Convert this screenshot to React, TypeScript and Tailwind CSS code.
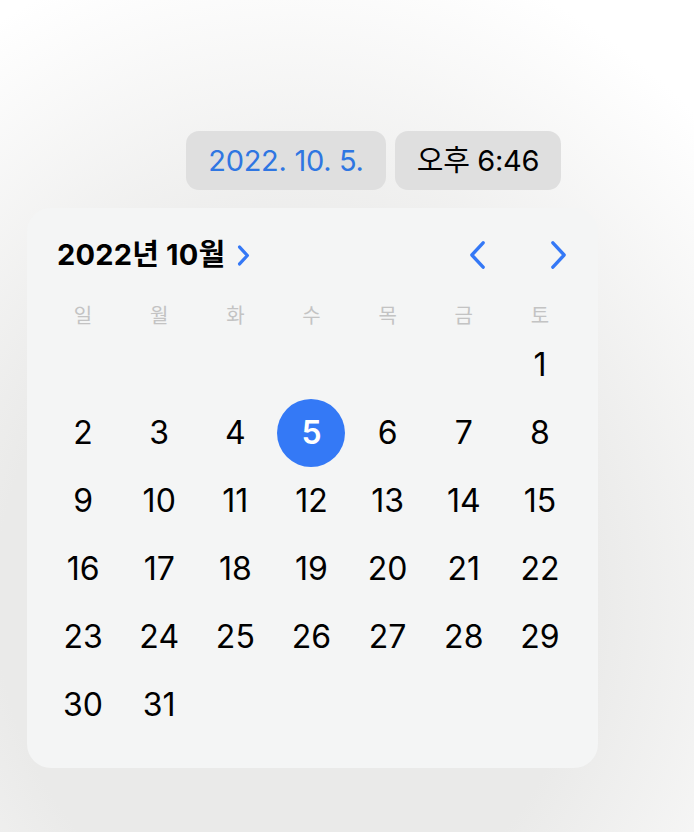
const days: (number | null)[] = [
  null, null, null, null, null, null, 1,
  ...Array.from({ length: 30 }, (_, i) => i + 2),
];

const weekdays = ['일', '월', '화', '수', '목', '금', '토'];

function Chevron({ dir, className, weight = 3.6 }: { dir: 'left' | 'right'; className?: string; weight?: number }) {
  return (
    <svg viewBox="0 0 20 32" className={className} fill="none" stroke="#3478f6" strokeWidth={weight} strokeLinecap="round" strokeLinejoin="round">
      {dir === 'left' ? <path d="M16 3 L4 16 L16 29" /> : <path d="M4 3 L16 16 L4 29" />}
    </svg>
  );
}

export default function App() {
  return (
    <div
      className="h-[832px] w-full overflow-hidden bg-[radial-gradient(ellipse_85%_80%_at_42%_72%,#eaeae9_50%,#ffffff_100%)] pt-[131px]"
      style={{ fontFamily: 'Inter, "Noto Sans CJK KR", sans-serif' }}
    >
      {/* date / time pills */}
      <div className="flex gap-[9px] pl-[186px]">
        <div className="flex h-[59px] w-[200px] items-center justify-center rounded-[13px] bg-[#dfdfdf] text-[29px] tracking-[-0.3px] text-[#2f76e2]">
          2022. 10. 5.
        </div>
        <div className="flex h-[59px] w-[166px] items-center justify-center rounded-[13px] bg-[#dfdfdf] text-[29px] tracking-[-0.3px] text-black">
          오후 6:46
        </div>
      </div>

      {/* calendar card */}
      <div className="ml-[27px] mt-[18px] h-[560px] w-[571px] rounded-[24px] bg-[#f4f5f5] pt-[27px]">
        <div className="flex h-[40px] items-center pl-[30px] pr-[30px]">
          <div className="text-[29px] font-bold tracking-[0.2px] text-black">2022년 10월</div>
          <Chevron dir="right" weight={5} className="ml-[12px] h-[21px] w-[13px]" />
          <div className="ml-auto flex items-center gap-[62px]">
            <Chevron dir="left" className="h-[30px] w-[19px]" />
            <Chevron dir="right" className="h-[30px] w-[19px]" />
          </div>
        </div>

        <div className="ml-[18px] mt-[25px] grid w-[533px] grid-cols-7">
          {weekdays.map((w) => (
            <div key={w} className="flex h-[31px] items-center justify-center text-[20px] text-[#c3c3c3]">
              {w}
            </div>
          ))}
        </div>

        <div className="ml-[18px] grid w-[533px] grid-cols-7">
          {days.map((d, i) => (
            <div key={i} className="flex h-[68px] items-center justify-center">
              {d === 5 ? (
                <div className="flex h-[68px] w-[68px] items-center justify-center rounded-full bg-[#3479f6] text-[32px] font-semibold text-white">
                  5
                </div>
              ) : (
                <span className="text-[32px] text-black">{d ?? ''}</span>
              )}
            </div>
          ))}
        </div>
      </div>
    </div>
  );
}
